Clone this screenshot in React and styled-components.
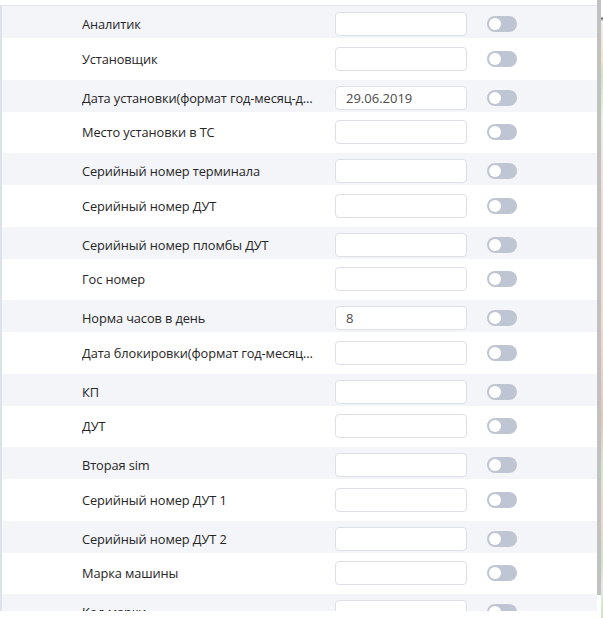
import React from 'react'
import styled, { createGlobalStyle } from 'styled-components'

const GlobalStyle = createGlobalStyle`
  html, body {
    margin: 0;
    background: #ffffff;
  }
  body {
    font-family: "Open Sans", "Noto Sans", sans-serif;
  }
`;

const Screen = styled.div`
  display: flex;
  width: 603px;
  height: 618px;
  overflow: hidden;
`;

const Panel = styled.div`
  width: 595px;
  height: 605px;
  margin-top: 5px;
  border-top: 1px solid #e3e6ec;
  border-left: 2px solid #dde2ea;
  overflow: hidden;
`;

const Scrollbar = styled.div`
  width: 4px;
  height: 595px;
  background: #c1c1c1;
`;

const MapEdge = styled.div`
  width: 2px;
  height: 618px;
  background: linear-gradient(
    to bottom,
    #ffffff 0px,
    #ffffff 17px,
    #555 18px,
    #eee 21px,
    #f3e3c9 60px,
    #cfe5c4 75px,
    #e9f1e4 120px,
    #f2dcd6 200px,
    #f4d9d2 330px,
    #e3c8b8 420px,
    #d9e8d0 470px,
    #f0d7d2 520px,
    #cfe3c5 560px,
    #e8e8e8 585px,
    #cde6bf 618px
  );
`;

const Row = styled.div`
  display: flex;
  align-items: center;
  box-sizing: border-box;
  height: ${p => (p.$striped ? '32px' : '41.5px')};
  padding: ${p => (p.$striped ? '4px 0 0 80px' : '0 0 0 80px')};
  background: ${p => (p.$striped ? '#f4f5f9' : '#ffffff')};
`;

const Label = styled.div`
  width: 234px;
  margin-right: 19px;
  font-size: 12.8px;
  letter-spacing: -0.1px;
  color: #262626;
  white-space: nowrap;
  overflow: hidden;
  text-overflow: ellipsis;
`;

const Input = styled.input`
  box-sizing: border-box;
  width: 132px;
  height: 24px;
  margin: 0 20px 0 0;
  padding: 0 10px;
  border: 1px solid #dcdfe6;
  border-radius: 4px;
  background: #ffffff;
  font-family: inherit;
  font-size: 13px;
  color: #4a4a4a;
  outline: none;
`;

const Switch = styled.span`
  display: flex;
  align-items: center;
  box-sizing: border-box;
  width: 30px;
  height: 16px;
  padding: 0 2px;
  border-radius: 8px;
  background: #bfc5d2;

  &::after {
    content: '';
    width: 12px;
    height: 12px;
    border-radius: 50%;
    background: #ffffff;
  }
`;

const fields = [
  { label: 'Аналитик' },
  { label: 'Установщик' },
  { label: 'Дата установки(формат год-месяц-день)', value: '29.06.2019' },
  { label: 'Место установки в ТС' },
  { label: 'Серийный номер терминала' },
  { label: 'Серийный номер ДУТ' },
  { label: 'Серийный номер пломбы ДУТ' },
  { label: 'Гос номер' },
  { label: 'Норма часов в день', value: '8' },
  { label: 'Дата блокировки(формат год-месяц-день)' },
  { label: 'КП' },
  { label: 'ДУТ' },
  { label: 'Вторая sim' },
  { label: 'Серийный номер ДУТ 1' },
  { label: 'Серийный номер ДУТ 2' },
  { label: 'Марка машины' },
  { label: 'Код марки' },
  { label: 'Модель машины' },
];

export default function App() {
  return (
    <>
      <GlobalStyle />
      <Screen>
        <Panel>
          {fields.map((f, i) => (
            <Row key={f.label} $striped={i % 2 === 0}>
              <Label>{f.label}</Label>
              <Input defaultValue={f.value || ''} />
              <Switch />
            </Row>
          ))}
        </Panel>
        <Scrollbar />
        <MapEdge />
      </Screen>
    </>
  )
}
